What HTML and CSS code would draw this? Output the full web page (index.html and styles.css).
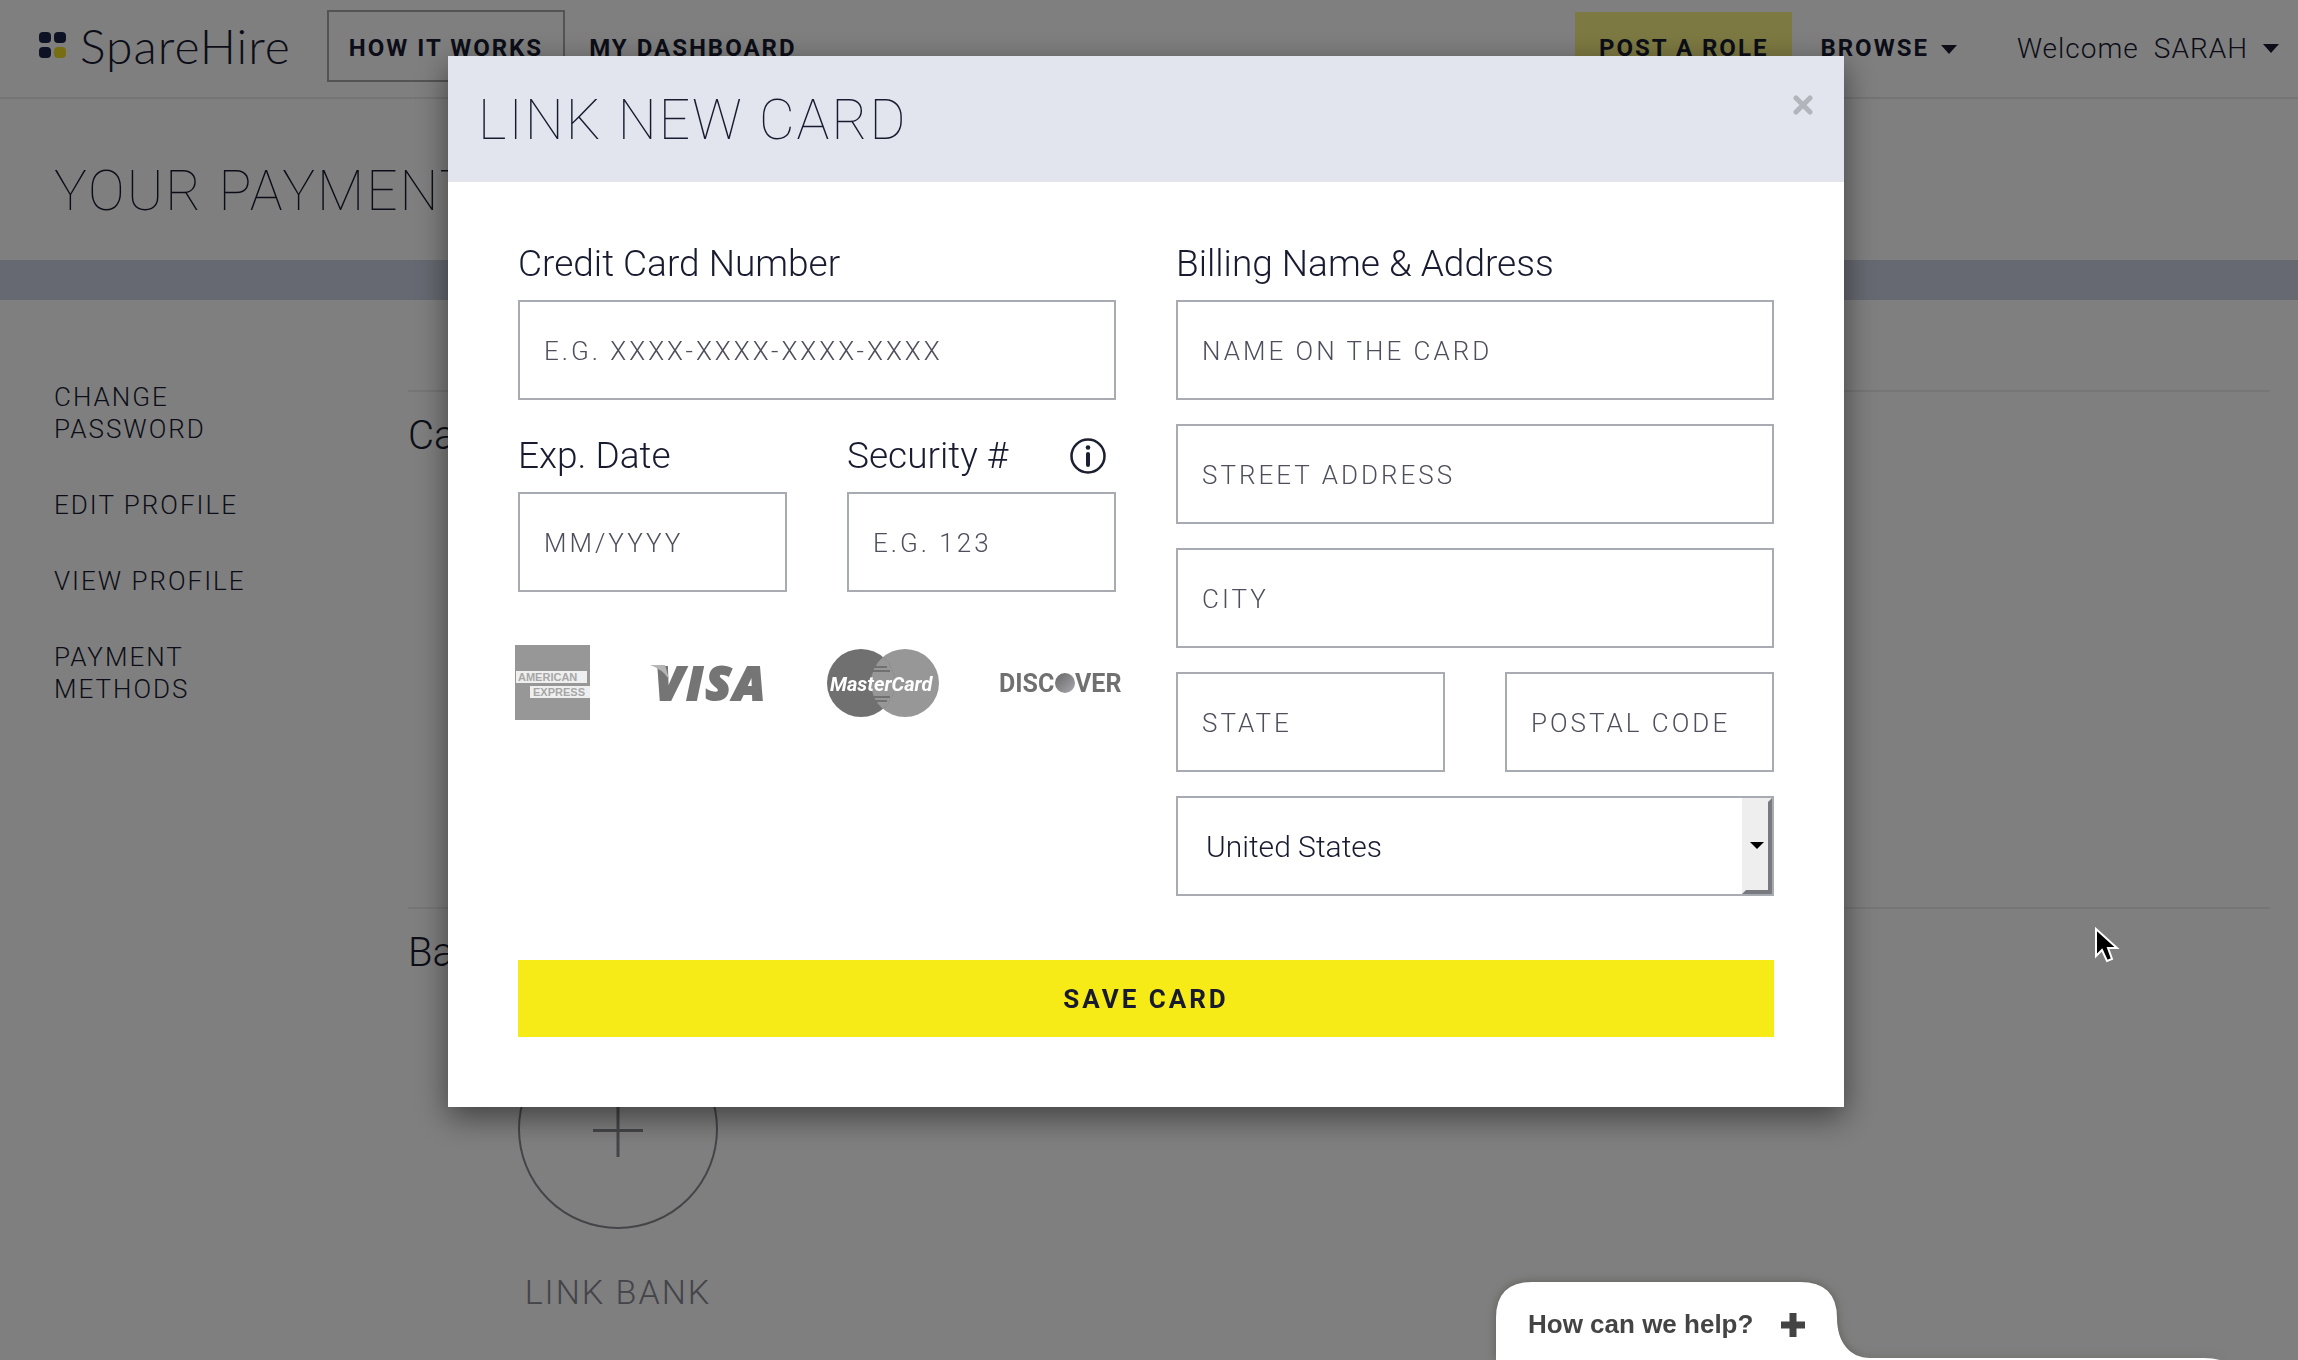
FILE: index.html
```html
<!DOCTYPE html>
<html lang="en">
<head>
<meta charset="utf-8">
<meta name="viewport" content="width=device-width, initial-scale=1">
<title>SpareHire</title>
<link rel="stylesheet" href="styles.css">
</head>
<body>
<header class="topbar">
  <a class="brand" href="#">
    <svg class="brand-mark" width="28" height="28" viewBox="0 0 28 28" aria-hidden="true">
      <rect x="0" y="0" width="12" height="11" rx="4" fill="#1b2548"/>
      <rect x="15" y="0" width="12" height="11" rx="4" fill="#1b2548"/>
      <rect x="0" y="15" width="12" height="11" rx="4" fill="#1b2548"/>
      <rect x="15" y="15" width="12" height="11" rx="4" fill="#efdc26"/>
    </svg>
    <span class="brand-name">SpareHire</span>
  </a>
  <nav class="nav-main">
    <a class="nav-link nav-boxed" href="#">HOW IT WORKS</a>
    <a class="nav-link" href="#">MY DASHBOARD</a>
  </nav>
  <nav class="nav-user">
    <a class="nav-link nav-post" href="#">POST A ROLE</a>
    <a class="nav-link nav-menu" href="#">BROWSE <span class="caret"></span></a>
    <a class="welcome" href="#"><span>Welcome</span><span>SARAH</span><span class="caret"></span></a>
  </nav>
</header>

<div class="page-title"><h1>YOUR PAYMENT METHODS</h1></div>

<main class="layout">
  <aside class="sidebar">
    <a href="#">CHANGE PASSWORD</a>
    <a href="#">EDIT PROFILE</a>
    <a href="#">VIEW PROFILE</a>
    <a href="#">PAYMENT METHODS</a>
  </aside>
  <div class="content">
    <section class="methods"><h2>Cards</h2></section>
    <section class="methods">
      <h2>Banks</h2>
      <a class="link-method" href="#">
        <svg class="add-circle" width="200" height="200" viewBox="0 0 200 200" aria-hidden="true">
          <circle cx="100" cy="100" r="99" fill="none" stroke="#8a8b92" stroke-width="2"/>
          <path d="M75 101.500H125" stroke="#8a8b92" stroke-width="3"/><path d="M100 75V128" stroke="#8a8b92" stroke-width="3"/>
        </svg>
        <span>LINK BANK</span>
      </a>
    </section>
  </div>
</main>

<div class="overlay">
  <form class="modal" role="dialog" aria-labelledby="modal-title">
    <div class="modal-head">
      <h2 id="modal-title">LINK NEW CARD</h2>
      <button class="close" type="button" aria-label="Close">
        <svg width="20" height="20" viewBox="0 0 20 20" aria-hidden="true"><path d="M3 3L17 17M17 3L3 17" stroke="#b2b5bc" stroke-width="5" stroke-linecap="round"/></svg>
      </button>
    </div>
    <div class="modal-body">
      <div class="columns">
        <div class="column">
          <div class="field">
            <label for="number">Credit Card Number</label>
            <input class="box" id="number" type="text" placeholder="E.G. XXXX-XXXX-XXXX-XXXX">
          </div>
          <div class="pair pair-labelled">
            <div class="field">
              <label for="exp">Exp. Date</label>
              <input class="box" id="exp" type="text" placeholder="MM/YYYY">
            </div>
            <div class="field">
              <div class="label-row">
                <label for="cvc">Security #</label>
                <svg width="36" height="36" viewBox="0 0 36 36" role="img" aria-label="Info">
                  <circle cx="18" cy="18" r="16.500" fill="none" stroke="#1c1f2f" stroke-width="2.500"/>
                  <circle cx="18" cy="9.500" r="2.300" fill="#1c1f2f"/>
                  <path d="M18 16V27" stroke="#1c1f2f" stroke-width="4" stroke-linecap="round"/>
                </svg>
              </div>
              <input class="box" id="cvc" type="text" placeholder="E.G. 123">
            </div>
          </div>
          <div class="brands">
            <svg width="75" height="75" viewBox="0 0 75 75" role="img" aria-label="American Express">
              <rect width="75" height="75" fill="#979797"/>
              <rect x="1" y="26" width="71" height="12" fill="#efefef"/>
              <rect x="15" y="41" width="60" height="12" fill="#efefef"/>
              <text class="amex" x="3" y="36">AMERICAN</text>
              <text class="amex" x="18" y="51">EXPRESS</text>
            </svg>
            <svg width="117" height="40" viewBox="0 0 117 40" role="img" aria-label="Visa">
              <text class="visa" x="5" y="37">VISA</text>
              <path d="M0 2H15L19 16Q12 6 0 2Z" fill="#b5b5b5"/>
            </svg>
            <svg width="112" height="70" viewBox="0 0 112 70" role="img" aria-label="MasterCard">
              <circle cx="78" cy="35" r="34" fill="#979797"/>
              <circle cx="34" cy="35" r="34" fill="#707070"/>
              <path d="M56 9A34 34 0 0 1 56 61A34 34 0 0 1 56 9Z" fill="#979797"/>
              <path d="M48 19H60M46 23H63M46 49H63M48 53H60" stroke="#707070" stroke-width="2"/>
              <text class="master" x="3" y="43">MasterCard</text>
            </svg>
            <svg width="125" height="30" viewBox="0 0 125 30" role="img" aria-label="Discover">
              <defs><linearGradient id="ball" x1="0" y1="0" x2="1" y2="1"><stop offset="0" stop-color="#666"/><stop offset="1" stop-color="#a9a9b0"/></linearGradient></defs>
              <text class="discover" x="0" y="24">DISC</text>
              <circle cx="66" cy="15" r="10" fill="url(#ball)"/>
              <text class="discover" x="76" y="24">VER</text>
            </svg>
          </div>
        </div>
        <div class="column">
          <div class="field">
            <label for="name">Billing Name &amp; Address</label>
            <input class="box" id="name" type="text" placeholder="NAME ON THE CARD">
          </div>
          <input class="box" type="text" aria-label="Street address" placeholder="STREET ADDRESS">
          <input class="box" type="text" aria-label="City" placeholder="CITY">
          <div class="pair">
            <input class="box" type="text" aria-label="State" placeholder="STATE">
            <input class="box" type="text" aria-label="Postal code" placeholder="POSTAL CODE">
          </div>
          <div class="select-wrap">
            <select class="box" aria-label="Country"><option>United States</option></select>
          </div>
        </div>
      </div>
      <button class="save" type="submit">SAVE CARD</button>
    </div>
  </form>
</div>

<button class="help" type="button">
  <svg class="help-shape" width="740" height="96" viewBox="0 0 740 96" aria-hidden="true">
    <path d="M8 100V54Q8 18 44 18H312Q349 18 349 54C349 78 362 94 382 94H716Q732 94 740 100Z" fill="#fff"/>
  </svg>
  <span class="help-text">How can we help?</span>
  <svg class="help-plus" width="24" height="24" viewBox="0 0 24 24" aria-hidden="true"><path d="M12 0V24M0 12H24" stroke="#444" stroke-width="7"/></svg>
</button>

<svg class="pointer" width="28" height="38" viewBox="0 0 28 38" aria-hidden="true">
  <path d="M2 2V29L8 23L13 34L18 32L14 21H23Z" fill="#000" stroke="#fff" stroke-width="2"/>
</svg>
</body>
</html>
```
FILE: styles.css
```css
*, *::before, *::after { box-sizing: border-box; }

body {
  margin: 0;
  min-height: 100vh;
  overflow: hidden;
  background: #fff;
  color: #181b30;
  font-family: Roboto, "Liberation Sans", sans-serif;
  font-weight: 300;
}

a { color: inherit; text-decoration: none; }
h1, h2 { margin: 0; }
button { border: 0; padding: 0; font: inherit; color: inherit; }

/* top bar */
.topbar {
  display: flex;
  align-items: center;
  padding: 10px 19px 15px 39px;
  border-bottom: 2px solid #e9e9e9;
}
.brand { display: flex; align-items: center; gap: 13px; margin-right: 36px; }
.brand-name {
  font-family: Lato, sans-serif;
  font-weight: 300;
  font-size: 48px;
  line-height: 56px;
  letter-spacing: 1px;
}
.nav-main, .nav-user { display: flex; align-items: center; }
.nav-main { gap: 4px; }
.nav-user { margin-left: auto; }
.nav-link {
  padding: 4px 20px 0;
  font-size: 24px;
  font-weight: 700;
  letter-spacing: 2px;
  line-height: 64px;
  white-space: nowrap;
}
.nav-boxed { border: 2px solid #a8a8a8; }
.nav-post { padding: 4px 24px 0; background: #faf284; }
.nav-menu { padding: 4px 28px 0; }
.nav-menu .caret { margin-left: 4px; }
.welcome {
  display: flex;
  align-items: center;
  gap: 15px;
  margin-left: 32px;
  padding-top: 4px;
  font-size: 28px;
  letter-spacing: 1px;
}
.caret {
  display: inline-block;
  border: 8px solid transparent;
  border-top: 9px solid #181b30;
  border-bottom: 0;
  vertical-align: middle;
}

/* page */
.page-title { padding: 60px 54px 37px; border-bottom: 40px solid #ced3e4; }
.page-title h1, .modal-head h2 {
  font-size: 55px;
  font-weight: 100;
  line-height: 64px;
  letter-spacing: 2px;
}
.layout { display: flex; }
.sidebar {
  display: flex;
  flex: none;
  flex-direction: column;
  gap: 44px;
  width: 408px;
  padding: 81px 154px 0 54px;
  font-size: 26px;
  line-height: 32px;
  letter-spacing: 2px;
}
.content { flex: 1; padding: 90px 28px 0 0; }
.methods { min-height: 517px; padding-top: 20px; border-top: 2px solid #ececec; }
.methods h2 { font-size: 40px; font-weight: 300; line-height: 48px; }
.link-method {
  display: inline-flex;
  flex-direction: column;
  align-items: center;
  gap: 43px;
  margin: 52px 0 0 110px;
  color: #888992;
  font-size: 34px;
  line-height: 40px;
  letter-spacing: 2px;
}

/* modal */
.overlay {
  position: fixed;
  inset: 0;
  padding: 56px 26px 0 20px;
  background: rgba(0, 0, 0, .5);
}
.modal {
  max-width: 1396px;
  margin: 0 auto;
  background: #fff;
  box-shadow: 0 10px 30px rgba(0, 0, 0, .5);
}
.modal-head {
  display: flex;
  align-items: center;
  justify-content: space-between;
  padding: 32px 31px 30px 30px;
  background: #e2e4ee;
}
.close { display: flex; align-self: flex-start; margin-top: 7px; background: none; }
.modal-body { padding: 58px 70px 70px; }
.columns { display: grid; grid-template-columns: 1fr 1fr; gap: 60px; }
.column { display: flex; flex-direction: column; gap: 24px; min-width: 0; }
.field { display: flex; flex-direction: column; gap: 12px; min-width: 0; }
.field label { font-size: 37px; line-height: 48px; white-space: nowrap; }
.label-row { display: flex; align-items: center; justify-content: space-between; padding-right: 10px; }
.pair { display: grid; grid-template-columns: 1fr 1fr; gap: 60px; }
.pair-labelled { margin-top: 8px; }
.box {
  width: 100%;
  height: 100px;
  padding: 2px 24px 0;
  border: 2px solid #a9abb2;
  border-radius: 0;
  background: #fff;
  color: #181b30;
  font: 300 26px/32px Roboto, sans-serif;
  letter-spacing: 3px;
}
.box::placeholder { color: #4e4f5c; opacity: 1; }
.select-wrap { position: relative; }
select.box { appearance: none; padding-left: 28px; font-size: 30px; letter-spacing: 0; }
.select-wrap::before {
  content: "";
  position: absolute;
  inset: 2px 2px 2px auto;
  width: 30px;
  border: 4px solid #777b80;
  border-top-color: #eee;
  border-left-color: #eee;
  background: #eee;
  pointer-events: none;
}
.select-wrap::after {
  content: "";
  position: absolute;
  top: 46px;
  right: 10px;
  border: 7px solid transparent;
  border-top-color: #000;
  border-bottom: 0;
  pointer-events: none;
}
.brands {
  display: flex;
  align-items: center;
  justify-content: space-between;
  margin: 29px -8px 0 -3px;
}
.amex { font: 700 11px "Liberation Sans", sans-serif; fill: #a6a6a6; }
.visa {
  font: italic 800 46px "Open Sans", sans-serif;
  fill: #757575;
  stroke: #757575;
  stroke-width: 2px;
  letter-spacing: 3px;
}
.master { font: italic 700 20px Roboto, sans-serif; fill: #fff; }
.discover { font: 700 25px Roboto, sans-serif; fill: #707070; }
.save {
  display: block;
  width: 100%;
  margin-top: 64px;
  padding-top: 2px;
  background: #f6eb16;
  font-size: 26px;
  font-weight: 700;
  line-height: 75px;
  letter-spacing: 3px;
}

/* help tab */
.help {
  position: fixed;
  right: 70px;
  bottom: 0;
  display: flex;
  align-items: center;
  gap: 28px;
  width: 740px;
  height: 96px;
  padding: 25px 0 0 40px;
  background: none;
  color: #444;
  font: 700 26px "Liberation Sans", sans-serif;
}
.help-shape { position: absolute; inset: 0; filter: drop-shadow(0 0 5px rgba(60, 60, 50, .5)); }
.help-text, .help-plus { position: relative; }

.pointer { position: absolute; left: 2094px; top: 927px; }
```
